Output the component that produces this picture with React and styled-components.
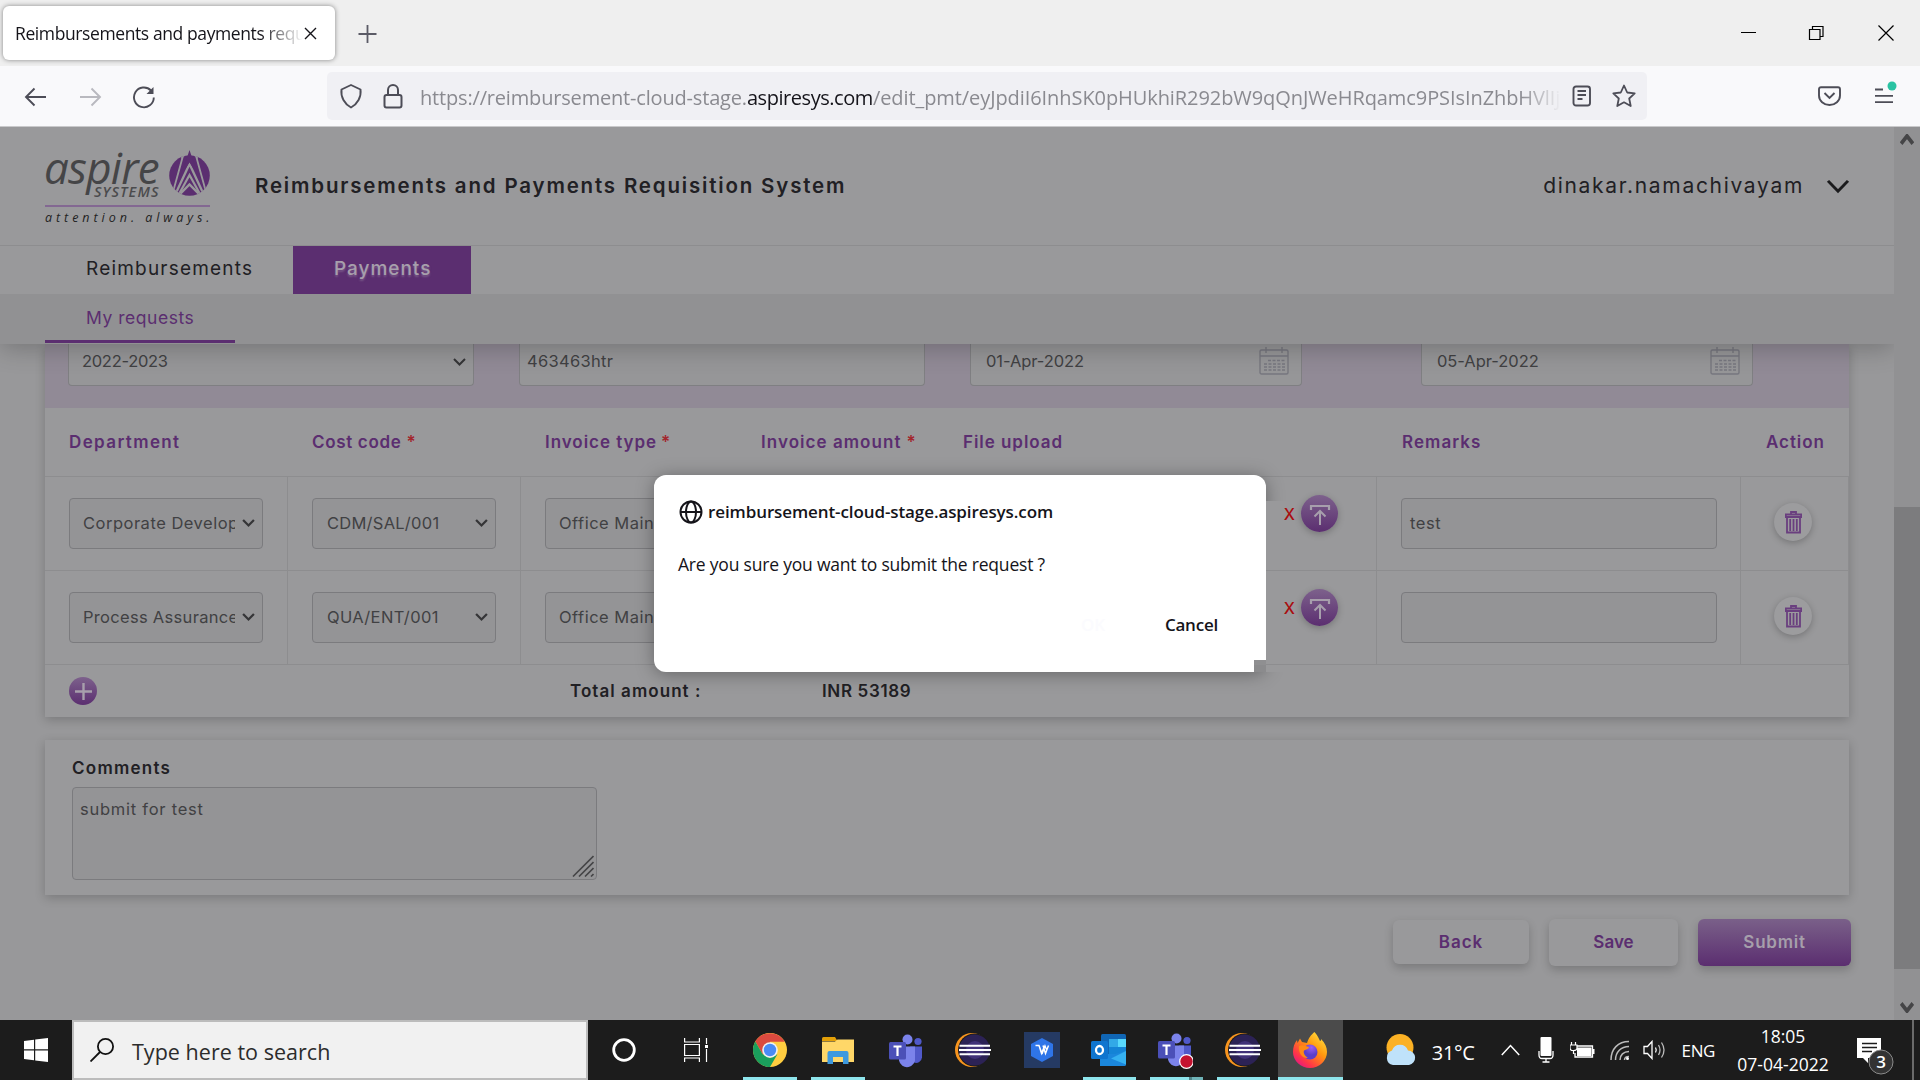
import React from 'react';
import styled, { createGlobalStyle, css } from 'styled-components';

const UI = '"Open Sans", "Noto Sans", sans-serif';
const WEB = 'Inter, "Open Sans", sans-serif';
const PURPLE = '#5b2e70';

const Global = createGlobalStyle`
  * { box-sizing: border-box; }
  body { margin: 0; overflow: hidden; background: #98989a; }
  svg { display: block; flex: none; }
`;

const Screen = styled.div`
  position: relative;
  width: 1920px;
  height: 1080px;
  display: flex;
  flex-direction: column;
  overflow: hidden;
  font-family: ${UI};
  white-space: nowrap;
`;

/* ---------- browser chrome ---------- */
const TabStrip = styled.div`
  height: 66px;
  flex: none;
  background: #efefef;
  display: flex;
  align-items: flex-start;
  padding: 6px 25px 0 3px;
`;
const Tab = styled.div`
  width: 332px;
  height: 54px;
  border-radius: 6px;
  background: #fff;
  box-shadow: 0 0 5px rgba(0, 0, 0, 0.45);
  display: flex;
  align-items: center;
  padding-left: 12px;
`;
const TabTitle = styled.div`
  width: 289px;
  overflow: hidden;
  font-size: 17.5px;
  letter-spacing: -0.4px;
  line-height: 28px;
  color: #15141a;
  mask-image: linear-gradient(90deg, #000 245px, transparent 288px);
`;
const NewTab = styled.div`
  margin: 18px auto 0 23px;
`;
const WindowButtons = styled.div`
  display: flex;
  gap: 52px;
  padding-top: 18px;
`;
const NavBar = styled.div`
  height: 61px;
  flex: none;
  background: #f9f9fb;
  border-bottom: 1px solid #c9c9cb;
  display: flex;
  align-items: center;
  padding: 0 23px 0 24px;
`;
const NavButtons = styled.div`
  width: 303px;
  display: flex;
  gap: 30px;
  padding-top: 2px;
`;
const UrlBar = styled.div`
  width: 1320px;
  height: 48px;
  border-radius: 5px;
  background: #f0f0f4;
  display: flex;
  align-items: center;
  padding: 0 11px 0 12px;
`;
const UrlText = styled.div`
  width: 1141px;
  margin: 3px 0 0 17px;
  overflow: hidden;
  font-size: 20px;
  line-height: 36px;
  color: #8a8a90;
  mask-image: linear-gradient(90deg, #000 1100px, transparent 1141px);
`;
const UrlPart = styled.span`
  letter-spacing: ${(p) => p.$ls}px;
  ${(p) => p.$host && css`color: #15141a;`}
`;
const Spacer = styled.div`
  width: ${(p) => p.$w || 0}px;
  flex: ${(p) => (p.$w ? 'none' : 1)};
`;

/* ---------- page ---------- */
const Viewport = styled.div`
  height: 893px;
  display: flex;
  background: #98989a;
  font-family: ${WEB};
`;
const Page = styled.div`
  width: 1894px;
  display: flex;
  flex-direction: column;
`;
const Scrollbar = styled.div`
  width: 26px;
  background: #919193;
  display: flex;
  flex-direction: column;
  align-items: center;
  justify-content: space-between;
  padding: 7px 0 7px;
`;
const Thumb = styled.div`
  width: 26px;
  height: 462px;
  margin-top: 362px;
  margin-bottom: auto;
  background: #7c7c7e;
`;
const Sticky = styled.div`
  position: relative;
  z-index: 1;
  flex: none;
  box-shadow: 0 4px 24px rgba(0, 0, 0, 0.24);
  clip-path: inset(0 0 -60px 0);
`;
const Header = styled.div`
  height: 119px;
  background: #99999b;
  border-bottom: 1px solid #8d8d8f;
  display: flex;
  align-items: center;
  padding: 0 44px 0 45px;
`;
const Logo = styled.div`
  width: 165px;
  height: 76px;
  display: flex;
  flex-direction: column;
  font-family: "Open Sans", sans-serif;
`;
const LogoTop = styled.div`
  height: 56px;
  flex: none;
  display: flex;
  justify-content: space-between;
  svg { margin-top: 2px; }
`;
const LogoWords = styled.div`
  width: 118px;
  font-style: italic;
`;
const LogoName = styled.div`
  font-size: 44px;
  line-height: 38px;
  height: 36px;
  font-weight: 500;
  letter-spacing: -0.8px;
  margin-left: -1px;
  color: #454547;
`;
const LogoSub = styled.div`
  margin: 0 0 0 49px;
  font-size: 14.5px;
  line-height: 15px;
  font-weight: 600;
  letter-spacing: 1.1px;
  color: #4b4b4d;
`;
const LogoTag = styled.div`
  flex: none;
  margin-top: 1px;
  border-top: 2px solid #836892;
  font-size: 12.5px;
  line-height: 21px;
  font-style: italic;
  letter-spacing: 3.96px;
  color: #1f1f22;
`;
const Title = styled.div`
  margin: -2px auto 0 45px;
  font-size: 20.5px;
  font-weight: 600;
  letter-spacing: 1.82px;
  color: #212024;
`;
const User = styled.div`
  margin: -2px 22px 0 0;
  font-size: 21px;
  letter-spacing: 1.69px;
  color: #212024;
`;
const Tabs = styled.div`
  height: 48px;
  background: #99999b;
  display: flex;
  padding-left: 45px;
`;
const MainTab = styled.div`
  width: ${(p) => p.$w}px;
  padding-left: 41px;
  font-size: 19px;
  font-weight: ${(p) => (p.$active ? 500 : 400)};
  line-height: 46px;
  letter-spacing: ${(p) => (p.$active ? 0.98 : 1.2)}px;
  color: #212024;
  ${(p) =>
    p.$active &&
    css`
      margin-left: 5px;
      background: ${PURPLE};
      color: #a79fac;
      text-shadow: 0 2px 2px rgba(150, 130, 160, 0.5);
    `}
`;
const SubNav = styled.div`
  height: 50px;
  background: #919193;
  padding-left: 45px;
`;
const SubTab = styled.div`
  width: 190px;
  height: 49px;
  border-bottom: 3px solid ${PURPLE};
  padding-left: 41px;
  font-size: 17.5px;
  font-weight: 400;
  line-height: 48px;
  letter-spacing: 0.53px;
  color: ${PURPLE};
`;
const Card = styled.div`
  width: 1804px;
  margin-left: 45px;
  background: #99999b;
  box-shadow: 0 3px 10px rgba(0, 0, 0, 0.2);
`;
const Band = styled.div`
  height: 64px;
  background: #918a96;
  display: flex;
  padding-left: 23px;
`;
const BandField = styled.div`
  width: ${(p) => p.$w}px;
  height: 42px;
  margin-right: ${(p) => p.$mr || 0}px;
  border: 1px solid #7f7f82;
  border-top: 0;
  border-radius: 0 0 4px 4px;
  background: #969698;
  display: flex;
  align-items: flex-start;
  padding: 4px ${(p) => p.$pr || 7}px 0 ${(p) => p.$pl}px;
  font-size: 16.5px;
  line-height: 26px;
  letter-spacing: ${(p) => p.$ls}px;
  color: #414143;
  justify-content: space-between;
`;
const CalendarSlot = styled.div`
  margin-top: -1px;
`;
const HeadRow = styled.div`
  height: 69px;
  border-bottom: 1px solid #8d8d8f;
  display: flex;
`;
const HeadCell = styled.div`
  width: ${(p) => p.$w}px;
  padding-left: ${(p) => p.$pl}px;
  font-size: 17px;
  font-weight: 600;
  line-height: 69px;
  letter-spacing: ${(p) => p.$ls}px;
  color: ${PURPLE};
`;
const Star = styled.span`
  margin-left: ${(p) => p.$ml}px;
  color: #a3262d;
`;
const BodyRow = styled.div`
  height: 94px;
  border-bottom: 1px solid #8d8d8f;
  display: flex;
`;
const Cell = styled.div`
  width: ${(p) => p.$w}px;
  padding: 21px 0 0 24px;
  border-right: 1px solid #8d8d8f;
`;
const Control = styled.div`
  width: ${(p) => p.$w}px;
  height: 51px;
  border: 1px solid #7b7b7e;
  border-radius: 4px;
  background: #949496;
  display: flex;
  align-items: center;
  justify-content: space-between;
  padding: 0 7px 1px ${(p) => p.$pl}px;
  font-size: 16.5px;
  letter-spacing: ${(p) => p.$ls}px;
  color: #414143;
`;
const Clip = styled.span`
  width: ${(p) => p.$w}px;
  overflow: hidden;
  line-height: 28px;
`;
const FileCell = styled.div`
  width: 610px;
  height: 93px;
  border-right: 1px solid #8d8d8f;
  display: flex;
  align-items: flex-start;
  justify-content: flex-end;
  gap: 6px;
  padding: 18px 38px 0 0;
`;
const RemoveMark = styled.div`
  font-size: 16px;
  font-weight: 500;
  line-height: 38px;
  color: #a90d10;
`;
const Round = styled.div`
  width: ${(p) => p.$d}px;
  height: ${(p) => p.$d}px;
  border-radius: 50%;
  display: flex;
  align-items: center;
  justify-content: center;
  background: ${(p) => (p.$plain ? '#9c9c9e' : `linear-gradient(#7d618c, ${PURPLE})`)};
  box-shadow: ${(p) => (p.$flat ? 'none' : '0 2px 7px rgba(0, 0, 0, 0.24)')};
`;
const ActionCell = styled.div`
  width: 108px;
  padding: 26px 0 0 33px;
  border-right: 1px solid #8d8d8f;
`;
const TotalRow = styled.div`
  height: 52px;
  display: flex;
  align-items: center;
  padding: 0 0 0 24px;
  font-size: 17px;
  font-weight: 600;
  color: #212024;
`;
const TotalText = styled.div`
  margin-left: ${(p) => p.$ml}px;
  width: ${(p) => p.$w}px;
  letter-spacing: ${(p) => p.$ls}px;
`;
const CommentsCard = styled(Card)`
  height: 155px;
  margin-top: 23px;
  padding: 14px 27px 0;
`;
const Label = styled.div`
  font-size: 17px;
  font-weight: 600;
  line-height: 28px;
  letter-spacing: 1.25px;
  color: #212024;
`;
const TextBox = styled.div`
  width: 525px;
  height: 93px;
  margin-top: 5px;
  border: 1px solid #7b7b7e;
  border-radius: 4px;
  background: #949496;
  display: flex;
  align-items: flex-end;
  justify-content: space-between;
  padding: 0 2px 2px 7px;
  font-size: 16.5px;
  letter-spacing: 0.75px;
  color: #414143;
`;
const BoxText = styled.div`
  align-self: flex-start;
  margin-top: 8px;
  line-height: 26px;
`;
const Buttons = styled.div`
  display: flex;
  justify-content: flex-end;
  align-items: center;
  gap: 20px;
  margin: 24px 43px 0 0;
`;
const Button = styled.div`
  width: ${(p) => p.$w}px;
  height: ${(p) => p.$h}px;
  margin-top: ${(p) => (p.$h < 47 ? -1 : 0)}px;
  border-radius: 6px;
  background: ${(p) => (p.$primary ? `linear-gradient(#7a6089, ${PURPLE})` : '#99999b')};
  color: ${(p) => (p.$primary ? '#a69fab' : PURPLE)};
  box-shadow: 0 4px 10px rgba(0, 0, 0, 0.2);
  font-size: 17px;
  font-weight: 600;
  line-height: ${(p) => (p.$h < 47 ? 45 : 46)}px;
  letter-spacing: ${(p) => p.$ls}px;
  text-align: center;
`;

/* ---------- confirm dialog ---------- */
const DialogWrap = styled.div`
  position: absolute;
  z-index: 2;
  left: 654px;
  top: 475px;
  clip-path: polygon(-40px -40px, 652px -40px, 652px 26px, 612px 26px, 612px 185px, 600px 185px, 600px 197px, 652px 197px, 652px 237px, -40px 237px);
`;
const Notch = styled.div`
  position: absolute;
  z-index: 2;
  left: 1254px;
  top: 660px;
  width: 12px;
  height: 12px;
  border-top: 5px solid #8f8f91;
  background: #8b8b8d;
`;
const Dialog = styled.div`
  width: 612px;
  height: 197px;
  border-radius: 12px;
  background: #fff;
  box-shadow: 0 2px 18px rgba(0, 0, 0, 0.34);
  padding: 21px 24px 0 25px;
  font-family: ${UI};
  font-size: 17.5px;
  color: #15141a;
`;
const DialogHost = styled.div`
  height: 30px;
  display: flex;
  align-items: center;
  gap: 5px;
  font-weight: 600;
  font-size: 17px;
  letter-spacing: -0.1px;
  svg { margin-top: 2px; }
`;
const DialogText = styled.div`
  margin: 23px 0 0 -1px;
  line-height: 30px;
  letter-spacing: -0.2px;
`;
const DialogButtons = styled.div`
  display: flex;
  justify-content: flex-end;
  gap: 60px;
  padding-right: 24px;
  margin-top: 31px;
  line-height: 30px;
  font-size: 17px;
  font-weight: 600;
  letter-spacing: -0.22px;
`;
const OkText = styled.span`
  color: #fbfbfe;
`;

/* ---------- taskbar ---------- */
const Taskbar = styled.div`
  height: 60px;
  flex: none;
  background: #1c1c1c;
  display: flex;
  color: #fff;
`;
const Start = styled.div`
  width: 72px;
  display: flex;
  align-items: center;
  justify-content: center;
`;
const Search = styled.div`
  width: 516px;
  border: 2px solid #bcbcbc;
  background: #f1f1f1;
  display: flex;
  align-items: center;
  gap: 18px;
  padding: 0 16px;
  font-size: 21.5px;
  letter-spacing: 0.03px;
  color: #2c2c2c;
`;
const SearchText = styled.div`
  padding-top: 3px;
`;
const TaskButton = styled.div`
  width: ${(p) => p.$w}px;
  margin-right: ${(p) => p.$mr || 0}px;
  display: flex;
  align-items: center;
  justify-content: center;
  background: ${(p) => (p.$active ? '#4b4b4b' : 'transparent')};
  border-bottom: 3px solid ${(p) => (p.$open ? '#8ee5ec' : 'transparent')};
  ${(p) => p.$stacked && css`border-image: linear-gradient(90deg, #8ee5ec 38px, #4f8388 38px, #4f8388 40px, #6fb3b8 40px) 3;`}
  padding: ${(p) => p.$pt || 3}px ${(p) => p.$pr || 0}px 0 0;
`;
const Tray = styled.div`
  display: flex;
  align-items: center;
  margin-left: auto;
  font-size: 17px;
`;
const Temp = styled.div`
  margin: 4px 26px 0 15px;
  font-size: 20px;
  letter-spacing: -0.3px;
`;
const Lang = styled.div`
  margin-left: 15px;
  letter-spacing: -0.4px;
`;
const Clock = styled.div`
  width: 96px;
  margin: 0 26px 0 20px;
  text-align: center;
  font-size: 17.5px;
  line-height: 28px;
`;
const Notifications = styled.div`
  margin-top: 12px;
`;
const ShowDesktop = styled.div`
  width: 8px;
  height: 60px;
  margin-left: 18px;
  border-left: 2px solid #6a6a6a;
`;

/* ---------- drawings ---------- */
const Chevron = ({ w = 13, h = 8, sw = 2, c = '#353537', up }) => (
  <svg width={w} height={h} viewBox="0 0 12 8" preserveAspectRatio="none" fill="none" stroke={c} strokeWidth={sw}>
    <path d={up ? 'M1 7L6 1.5L11 7' : 'M1 1L6 6.5L11 1'} />
  </svg>
);
const Calendar = () => (
  <CalendarSlot>
    <svg width="30" height="28" viewBox="0 0 30 28" fill="none" stroke="#77777f" strokeWidth="1.4">
      <rect x="1" y="3" width="28" height="24" rx="1.5" />
      <path d="M1 9H29M7 0V6M23 0V6" />
      <path d="M9 13.500H26M5 17H26M5 20H26M5 23H26" strokeDasharray="3 1.5" strokeWidth="1.600" />
    </svg>
  </CalendarSlot>
);
const Flame = () => (
  <svg width="41" height="46" viewBox="0 0 41 46">
    <defs><clipPath id="disc"><circle cx="20.500" cy="25.500" r="20.300" /></clipPath></defs>
    <g clipPath="url(#disc)">
      <rect width="41" height="46" fill={PURPLE} />
      <path d="M13.500 0H27.500L29 9L20.500 2L12 9Z" fill="#99999b" />
      <g fill="none" stroke="#99999b">
        <path d="M14.500 4L4 42M26.500 4L37 42" strokeWidth="1.800" />
        <path d="M6 45L20.500 14L35 45" strokeWidth="2.300" />
        <path d="M9.500 45L20.500 25L31.500 45" strokeWidth="2.200" />
        <path d="M9 46L20.500 34.500L32 46" strokeWidth="2.400" />
      </g>
    </g>
    <path d="M20.500 0L25.500 15L24 18L20.500 12.500L17 18L15.500 15Z" fill={PURPLE} />
  </svg>
);
const Upload = () => (
  <svg width="24" height="24" viewBox="0 0 24 24" fill="none" stroke="#a79fac" strokeWidth="2">
    <path d="M3 8V4H21V8" strokeWidth="2.200" /><path d="M12 23V9.500M6.500 14.500L12 9L17.500 14.500" />
  </svg>
);
const Trash = () => (
  <svg width="17" height="23" viewBox="0 0 17 23" fill="none" stroke="#6a3f7f" strokeWidth="1.800">
    <path d="M6 3V1H11V3M.8 3.500H16.200V6H.8ZM2 6V21.500H15V6M5.200 8V20M8.500 8V20M11.800 8V20" />
  </svg>
);
const Teams = ({ rec }) => (
  <svg width="36" height="37" viewBox="0 0 36 37">
    <circle cx="19.500" cy="5.500" r="5" fill="#7b83eb" /><circle cx="30" cy="7.500" r="3.600" fill="#5059c9" />
    <path d="M22 12.500H34V23.500a6 6 0 0 1-8 5Z" fill="#5059c9" />
    <path d="M11 12.500H27V23.500a8 8 0 0 1-16 3Z" fill="#7b83eb" />
    <rect x="1" y="8" width="17" height="17.500" rx="1.500" fill="#4b50b8" />
    <path d="M5.500 12.500H13.500M9.500 12.500V22" stroke="#fff" strokeWidth="2.200" />
    {rec && <circle cx="29.500" cy="28.500" r="6.800" fill="#c4122f" stroke="#fff" strokeWidth="1.200" />}
  </svg>
);
const Eclipse = () => (
  <svg width="36" height="34" viewBox="0 0 36 34">
    <circle cx="17" cy="17" r="17" fill="#f7941e" />
    <circle cx="19.500" cy="17" r="16.500" fill="#1c1c1c" /><circle cx="19.500" cy="17" r="15.500" fill="#2c2255" />
    <circle cx="20" cy="17" r="9" fill="#413278" />
    <path d="M4.500 12.800H35M4 17H36M4.500 21.200H35" stroke="#fff" strokeWidth="1.900" />
  </svg>
);

const HEADS = [
  [243, 24, 1.38, 'Department'],
  [233, 24, 0.67, 'Cost code', 5],
  [216, 24, 0.95, 'Invoice type', 4],
  [202, 24, 1.05, 'Invoice amount', 5],
  [439, 24, 0.95, 'File upload'],
  [364, 24, 1.05, 'Remarks'],
  [107, 24, 0.95, 'Action'],
];
const ROWS = [
  ['Corporate Development', 0.5, 'CDM/SAL/001', 0.25, 'test'],
  ['Process Assurance', 0.3, 'QUA/ENT/001', 0.35, ''],
];

export default function App() {
  return (
    <Screen>
      <Global />
      <TabStrip>
        <Tab>
          <TabTitle>Reimbursements and payments requisition</TabTitle>
          <svg width="13" height="13" viewBox="0 0 13 13" stroke="#15141a" strokeWidth="1.400"><path d="M1 1L12 12M12 1L1 12" /></svg>
        </Tab>
        <NewTab>
          <svg width="19" height="20" viewBox="0 0 19 20" stroke="#5b5b66" strokeWidth="1.800"><path d="M9.500 1V19M.5 10H18.500" /></svg>
        </NewTab>
        <WindowButtons>
          <svg width="17" height="18" viewBox="0 0 17 18" stroke="#000"><path d="M2 8.500H17" /></svg>
          <svg width="17" height="18" viewBox="0 0 17 18" fill="none" stroke="#000" strokeWidth="1.200"><path d="M1.500 5.500H12V15.500H1.500ZM4.500 5.500V2.500H15V12.500H12" /></svg>
          <svg width="18" height="18" viewBox="0 0 18 18" stroke="#000" strokeWidth="1.200"><path d="M1.500 1.500L16.500 16.500M16.500 1.500L1.500 16.500" /></svg>
        </WindowButtons>
      </TabStrip>
      <NavBar>
        <NavButtons>
          <svg width="24" height="24" viewBox="0 0 24 24" fill="none" stroke="#4d4d57" strokeWidth="1.900"><path d="M22 12H2M10.500 3.500L2 12L10.500 20.500" /></svg>
          <svg width="24" height="24" viewBox="0 0 24 24" fill="none" stroke="#b9b9bf" strokeWidth="1.900"><path d="M2 12H22M13.500 3.500L22 12L13.500 20.500" /></svg>
          <svg width="24" height="24" viewBox="0 0 24 24" fill="none" stroke="#4d4d57" strokeWidth="1.900"><path d="M21.800 12.500A9.900 9.900 0 1 1 19 5.500" /><path d="M21.500 2V9H14.500Z" fill="#4d4d57" stroke="none" /></svg>
        </NavButtons>
        <UrlBar>
          <svg width="24" height="26" viewBox="0 0 24 26" fill="none" stroke="#4d4d57" strokeWidth="1.900"><path d="M12 2L21.500 6.500C22.500 14 18.500 21 12 24.500C5.500 21 1.500 14 2.500 6.500Z" strokeLinejoin="round" /></svg>
          <Spacer $w={20} />
          <svg width="20" height="26" viewBox="0 0 20 26" fill="none" stroke="#4d4d57" strokeWidth="2"><rect x="1.500" y="12" width="17" height="12.500" rx="2" /><path d="M5 12V7a5 5 0 0 1 10 0V12" /></svg>
          <UrlText>
            <UrlPart $ls={-0.176}>https://reimbursement-cloud-stage.</UrlPart>
            <UrlPart $ls={-0.45} $host>aspiresys.com</UrlPart>
            <UrlPart $ls={-0.078}>/edit_pmt/eyJpdiI6InhSK0pHUkhiR292bW9qQnJWeHRqamc9PSIsInZhbHVlIjoi</UrlPart>
          </UrlText>
          <Spacer $w={11} />
          <svg width="20" height="22" viewBox="0 0 20 22" fill="none" stroke="#4d4d57" strokeWidth="1.900"><rect x="1.500" y="1.500" width="16.500" height="19" rx="2.500" /><path d="M5.500 6H14M5.500 10H14M5.500 14H10.500" /></svg>
          <Spacer />
          <svg width="24" height="24" viewBox="0 0 24 24" fill="none" stroke="#4d4d57" strokeWidth="1.800" strokeLinejoin="round"><path d="M12 1.500L15.200 8.500L22.700 9.400L17.200 14.500L18.700 22L12 18.300L5.300 22L6.800 14.500L1.300 9.400L8.800 8.500Z" /></svg>
        </UrlBar>
        <Spacer />
        <svg width="23" height="21" viewBox="0 0 23 21" fill="none" stroke="#4d4d57" strokeWidth="1.900"><path d="M3 1.200H20a2 2 0 0 1 2 2V9.500a10.500 9.500 0 0 1-21 0V3.200a2 2 0 0 1 2-2Z" /><path d="M6.500 7L11.500 12L16.500 7" /></svg>
        <Spacer $w={33} />
        <svg width="23" height="32" viewBox="0 0 23 32" fill="none" stroke="#4d4d57" strokeWidth="1.800"><path d="M1 9.500H9M1 15.800H19M1 22.200H19" /><circle cx="18" cy="6" r="4.500" fill="#2ac3a2" stroke="none" /></svg>
      </NavBar>

      <Viewport>
        <Page>
          <Sticky>
            <Header>
              <Logo>
                <LogoTop>
                  <LogoWords>
                    <LogoName>aspire</LogoName>
                    <LogoSub>SYSTEMS</LogoSub>
                  </LogoWords>
                  <Flame />
                </LogoTop>
                <LogoTag>attention. always.</LogoTag>
              </Logo>
              <Title>Reimbursements and Payments Requisition System</Title>
              <User>dinakar.namachivayam</User>
              <Chevron w={24} h={15} sw={1.5} c="#1b1b1d" />
            </Header>
            <Tabs>
              <MainTab $w={243}>Reimbursements</MainTab>
              <MainTab $w={178} $active>Payments</MainTab>
            </Tabs>
            <SubNav><SubTab>My requests</SubTab></SubNav>
          </Sticky>

          <Card>
            <Band>
              <BandField $w={406} $mr={45} $pl={13} $ls={-0.3}>2022-2023<Spacer /><svg width="13" height="18" viewBox="0 0 13 18" fill="none" stroke="#353537" strokeWidth="2"><path d="M1 11L6.500 16.500L12 11" /></svg></BandField>
              <BandField $w={406} $mr={45} $pl={7} $ls={0.29}>463463htr</BandField>
              <BandField $w={332} $mr={119} $pl={15} $pr={12} $ls={-0.08}>01-Apr-2022<Calendar /></BandField>
              <BandField $w={332} $pl={15} $pr={12} $ls={-0.04}>05-Apr-2022<Calendar /></BandField>
            </Band>
            <HeadRow>
              {HEADS.map(([w, pl, ls, text, star]) => (
                <HeadCell key={text} $w={w} $pl={pl} $ls={ls}>{text}{star && <Star $ml={star}>*</Star>}</HeadCell>
              ))}
            </HeadRow>
            {ROWS.map(([dep, ls1, code, ls2, remark]) => (
              <BodyRow key={dep}>
                <Cell $w={243}><Control $w={194} $pl={13} $ls={ls1}><Clip $w={152}>{dep}</Clip><Chevron /></Control></Cell>
                <Cell $w={233}><Control $w={184} $pl={14} $ls={ls2}>{code}<Chevron /></Control></Cell>
                <Cell $w={246}><Control $w={194} $pl={13} $ls={0.5}><Clip $w={152}>Office Maintenance</Clip><Chevron /></Control></Cell>
                <FileCell>
                  <RemoveMark>X</RemoveMark>
                  <Round $d={37}><Upload /></Round>
                </FileCell>
                <Cell $w={364}><Control $w={316} $pl={8} $ls={0.6}>{remark}</Control></Cell>
                <ActionCell><Round $d={38} $plain><Trash /></Round></ActionCell>
              </BodyRow>
            ))}
            <TotalRow>
              <Round $d={28} $flat>
                <svg width="17" height="17" viewBox="0 0 17 17" stroke="#a79fac" strokeWidth="2.400"><path d="M8.500 0V17M0 8.500H17" /></svg>
              </Round>
              <TotalText $ml={473} $w={252} $ls={1.05}>Total amount :</TotalText>
              <TotalText $ml={0} $w={120} $ls={0.65}>INR 53189</TotalText>
            </TotalRow>
          </Card>

          <CommentsCard>
            <Label>Comments</Label>
            <TextBox>
              <BoxText>submit for test</BoxText>
              <svg width="22" height="22" viewBox="0 0 22 22" stroke="#454547" strokeWidth="1.600"><path d="M1 21.500L21.500 1M7 21.500L21.500 7M13 21.500L21.500 13M19 21.500L21.500 19" /></svg>
            </TextBox>
          </CommentsCard>

          <Buttons>
            <Button $w={136} $h={44} $ls={0.95}>Back</Button>
            <Button $w={129} $h={47} $ls={0}>Save</Button>
            <Button $w={153} $h={47} $ls={0.75} $primary>Submit</Button>
          </Buttons>
        </Page>
        <Scrollbar>
          <Chevron up w={14} h={11} sw={3} c="#454547" />
          <Thumb />
          <Chevron w={14} h={11} sw={3} c="#454547" />
        </Scrollbar>
      </Viewport>

      <Taskbar>
        <Start>
          <svg width="24" height="24" viewBox="0 0 24 24" fill="#fff"><path d="M0 3L10 1.700V11.300H0ZM11.200 1.500L24 0V11.300H11.200ZM0 12.500H10V22.300L0 21ZM11.200 12.500H24V24L11.200 22.500Z" /></svg>
        </Start>
        <Search>
          <svg width="24" height="24" viewBox="0 0 24 24" fill="none" stroke="#111" strokeWidth="1.800"><circle cx="15.500" cy="8.500" r="7.600" /><path d="M10 14L.5 23.500" /></svg>
          <SearchText>Type here to search</SearchText>
        </Search>
        <TaskButton $w={72}>
          <svg width="24" height="24" viewBox="0 0 24 24" fill="none" stroke="#fff" strokeWidth="2.800"><circle cx="12" cy="12" r="10.300" /></svg>
        </TaskButton>
        <TaskButton $w={71} $mr={12}>
          <svg width="24" height="24" viewBox="0 0 24 24" fill="none" stroke="#fff" strokeWidth="1.200"><path d="M.6 0V4H15.400V0M.6 6.500H15.400V17.500H.6ZM.6 24V20H15.400V24M22.500 0V6M22.500 11V24" /><rect x="21" y="7" width="3" height="3" fill="#fff" stroke="none" /></svg>
        </TaskButton>
        <TaskButton $w={54} $mr={14} $open>
          <svg width="34" height="34" viewBox="0 0 34 34">
            <circle cx="17" cy="17" r="17" fill="#ffcd40" />
            <path d="M17 17L9.500 21L2.300 8.500A17 17 0 0 1 31.700 8.800H17Z" fill="#db4a3f" />
            <path d="M9.500 21L2.300 8.500A17 17 0 0 0 17 34L24.400 21.200L17 25Z" fill="#1a9f5c" />
            <circle cx="17" cy="17" r="7.800" fill="#f1f1f1" /><circle cx="17" cy="17" r="6.200" fill="#4a8bf5" />
          </svg>
        </TaskButton>
        <TaskButton $w={54} $mr={14} $open>
          <svg width="32" height="27" viewBox="0 0 32 27"><path d="M0 1.500Q0 0 1.500 0H13L15.500 4H0Z" fill="#e3a008" /><path d="M0 4.500L13 4.500L15.500 2.500H32V25H0Z" fill="#ffd768" /><path d="M5.500 27V16a2 2 0 0 1 2-2H24.500a2 2 0 0 1 2 2V27H21V20H11V27Z" fill="#3e99de" /></svg>
        </TaskButton>
        <TaskButton $w={54} $mr={13} $pt={7}><Teams /></TaskButton>
        <TaskButton $w={54} $mr={15}><Eclipse /></TaskButton>
        <TaskButton $w={54} $mr={14}>
          <svg width="36" height="36" viewBox="0 0 36 36"><rect width="36" height="36" fill="#253a63" /><path d="M18 6L29 12V24L18 30L7 24V12Z" fill="#2f75e8" /><path d="M11.500 13.500H15L18 21.500M15 13.500L17.500 21.500L20.500 14M18 22L21 14L22.500 17.500M19 13.500L21.500 21.500L24.500 13.500" fill="none" stroke="#fff" strokeWidth="1.400" /></svg>
        </TaskButton>
        <TaskButton $w={53} $mr={14} $pr={2} $open>
          <svg width="36" height="32" viewBox="0 0 36 32"><rect x="10" width="25" height="20" rx="1.500" fill="#1066b5" /><path d="M18 5H27V13H18Z" fill="#32a9e7" /><path d="M27 5H35V13H27Z" fill="#58d9fd" /><path d="M18 13H35V20H18Z" fill="#1484d6" /><path d="M9 20H24L35 17V30.500a1.500 1.500 0 0 1-1.500 1.500H9Z" fill="#1b87dc" /><path d="M35 17V30.500L20 24.500Z" fill="#35b1f1" /><rect y="7" width="17" height="18" rx="1.500" fill="#0f75cf" /><ellipse cx="8.500" cy="16" rx="3.500" ry="4" fill="none" stroke="#fff" strokeWidth="2.300" /></svg>
        </TaskButton>
        <TaskButton $w={53} $mr={14} $pt={5} $pr={3} $open $stacked><Teams rec /></TaskButton>
        <TaskButton $w={53} $mr={8} $pr={2} $open><Eclipse /></TaskButton>
        <TaskButton $w={65} $pr={2} $open $active>
          <svg width="34" height="36" viewBox="0 0 34 36">
            <defs>
              <linearGradient id="fox" x1="1" y1="0" x2="0.200" y2="1"><stop offset="0" stopColor="#fff14a" /><stop offset="0.450" stopColor="#ff980e" /><stop offset="0.800" stopColor="#ff3647" /><stop offset="1" stopColor="#e31587" /></linearGradient>
              <radialGradient id="orb" cx="0.600" cy="0.200"><stop offset="0" stopColor="#9b5ff5" /><stop offset="1" stopColor="#5b3fc9" /></radialGradient>
            </defs>
            <path d="M21.500 0C25 4 26 7 27 9C28 9 28 8 28 7C32 11 34 15 34 20A17 16 0 0 1 0 20C0 15 1.500 11 4 8L4.500 11L7 6.500L9 10L14 11C16 5 18 3 21.500 0Z" fill="url(#fox)" />
            <circle cx="17" cy="20" r="7.500" fill="url(#orb)" />
            <path d="M6 14C9 12 13 14 16 15C16 17 13 17.500 11 18.500C10 21 12 24 15 26C9 27 5 20 6 14Z" fill="#ff8a16" />
          </svg>
        </TaskButton>
        <Tray>
          <svg width="32" height="34" viewBox="0 0 32 34"><circle cx="15" cy="14.500" r="13.500" fill="#fbb124" /><path d="M8 32a7.500 7.500 0 0 1-1-14.500a8.500 8.500 0 0 1 16 0a7.300 7.300 0 0 1 1 14.500Z" fill="#bfe2fa" /></svg>
          <Temp>31°C</Temp>
          <svg width="19" height="12" viewBox="0 0 19 12" fill="none" stroke="#fff" strokeWidth="1.500"><path d="M.8 11L9.500 1.500L18.200 11" /></svg>
          <Spacer $w={18} />
          <svg width="16" height="26" viewBox="0 0 16 26"><rect x="2.500" width="11" height="19" rx="1" fill="#fff" /><path d="M1 14V18Q1 21.500 4 21.500H12Q15 21.500 15 18V14M8 21.500V25M4.500 25H11.500" fill="none" stroke="#fff" strokeWidth="1.300" /></svg>
          <Spacer $w={16} />
          <svg width="25" height="16" viewBox="0 0 25 16"><path d="M6 4H22.500V15H5V11" fill="none" stroke="#fff" strokeWidth="1.300" /><rect x="7" y="5.500" width="14.500" height="8.500" fill="#fff" /><path d="M23.500 7V12" stroke="#fff" strokeWidth="2" /><path d="M1.500 0V3M5.500 0V3M0 3H7V6Q7 8.500 3.500 8.500Q0 8.500 0 6ZM3.500 8V12" fill="#1c1c1c" stroke="#fff" strokeWidth="1.200" /></svg>
          <Spacer $w={15} />
          <svg width="20" height="20" viewBox="0 0 20 20" fill="none" stroke="#bbb" strokeWidth="1.500"><path d="M1 20C1 9 8 1.500 19 1.500M5.500 20C5.500 12 11 6.500 19 6.500M10 20C10 15 13.500 11.500 19 11.500M14.500 20C14.500 18 16 16.500 19 16.500" /><circle cx="17.500" cy="18.500" r="1.500" fill="#fff" stroke="none" /></svg>
          <Spacer $w={13} />
          <svg width="24" height="20" viewBox="0 0 24 20" fill="none" stroke="#fff" strokeWidth="1.300"><path d="M1 6.500H4.500L9 1.500V18.500L4.500 13.500H1Z" /><path d="M12.500 7.500Q14 10 12.500 12.500" /><path d="M15.500 5Q18.500 10 15.500 15M18.500 2.500Q23.500 10 18.500 17.500" stroke="#bbb" /></svg>
          <Lang>ENG</Lang>
          <Clock>18:05<br />07-04-2022</Clock>
          <Notifications>
            <svg width="37" height="40" viewBox="0 0 37 40">
              <path d="M0 2H24V22H11L11 27L6 22H0Z" fill="#fff" /><path d="M5 7.500H20M5 11.500H20M5 15.500H15" stroke="#1c1c1c" strokeWidth="1.300" />
              <circle cx="24" cy="26" r="12" fill="#333" stroke="#8a8a8a" />
              <text x="24" y="32" textAnchor="middle" fill="#fff" fontFamily="Open Sans" fontSize="17" fontWeight="600">3</text>
            </svg>
          </Notifications>
          <ShowDesktop />
        </Tray>
      </Taskbar>

      <DialogWrap>
        <Dialog>
          <DialogHost>
            <svg width="24" height="24" viewBox="0 0 24 24" fill="none" stroke="#15141a" strokeWidth="2"><circle cx="12" cy="12" r="10.500" /><ellipse cx="12" cy="12" rx="5" ry="10.500" /><path d="M1.500 12H22.500" /></svg>
            reimbursement-cloud-stage.aspiresys.com
          </DialogHost>
          <DialogText>Are you sure you want to submit the request ?</DialogText>
          <DialogButtons><OkText>OK</OkText><span>Cancel</span></DialogButtons>
        </Dialog>
      </DialogWrap>
      <Notch />
    </Screen>
  );
}
